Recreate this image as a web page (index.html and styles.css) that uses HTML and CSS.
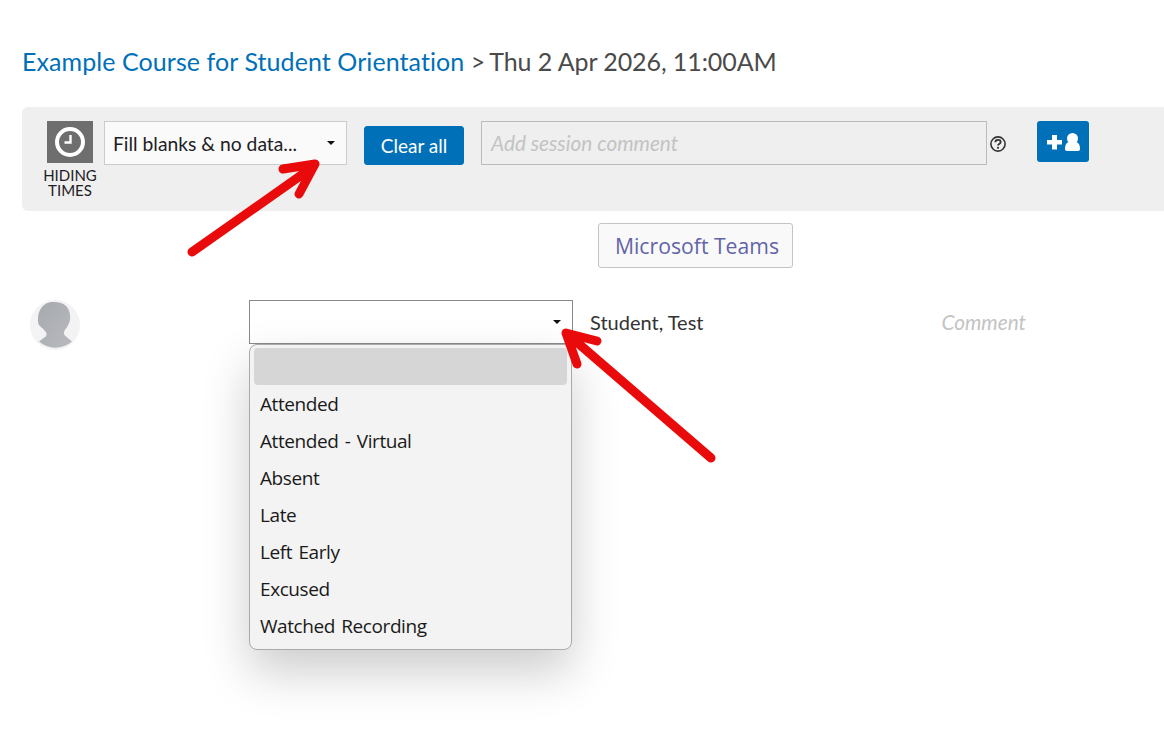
FILE: index.html
```html
<!DOCTYPE html>
<html lang="en">
<head>
<meta charset="utf-8">
<title>Attendance session</title>
<link rel="stylesheet" href="styles.css">
</head>
<body>
<main class="page">
  <h1 class="title"><a class="title-link">Example Course for Student Orientation</a> &gt;<span class="title-date">Thu 2 Apr 2026, 11:00AM</span></h1>
  <section class="toolbar">
    <div class="times">
      <div class="clock">
        <svg width="32" height="32" viewBox="0 0 32 32"><circle cx="16" cy="16" r="13" fill="#6e6e6e" stroke="#fff" stroke-width="4"/><path d="M16.500 9v7.500H10.500" fill="none" stroke="#fff" stroke-width="2.400"/></svg>
      </div>
      <div class="times-label">HIDING TIMES</div>
    </div>
    <div class="select select-fill"><span>Fill blanks &amp; no data...</span><i class="caret"></i></div>
    <button class="btn-clear">Clear all</button>
    <div class="comment-input">Add session comment</div>
    <svg class="help" width="16" height="16" viewBox="0 0 16 16"><circle cx="8" cy="8" r="7.100" fill="none" stroke="#333" stroke-width="1.600"/><path d="M5.300 6.300c0-1.600 1.200-2.500 2.700-2.500s2.700.9 2.700 2.300c0 2-2.700 1.900-2.700 3.500" fill="none" stroke="#333" stroke-width="1.800"/><circle cx="8" cy="11.800" r="1.100" fill="#333"/></svg>
    <button class="btn-add" aria-label="Add user">
      <svg width="33" height="18" viewBox="0 0 33 18"><path d="M5 2h5v5h5v4.500h-5v5H5v-5H0V7h5z" fill="#fff"/><circle cx="25.500" cy="5.500" r="5.500" fill="#fff"/><path d="M18 16c0-4 1.500-7 4.500-7h6c3 0 4.500 3 4.500 7 0 1.300-.8 2-2 2H20c-1.200 0-2-.7-2-2z" fill="#fff"/></svg>
    </button>
  </section>
  <div class="teams-row"><button class="btn-teams">Microsoft Teams</button></div>
  <section class="student-row">
    <div class="avatar">
      <svg width="50" height="50" viewBox="0 0 50 50"><defs><linearGradient id="avatar-fill" x1="0" y1="0" x2="1" y2="1"><stop offset="0" stop-color="#a6a9ae"/><stop offset="1" stop-color="#b8babe"/></linearGradient></defs><circle cx="25" cy="25" r="25" fill="#f3f3f4"/><path d="M23 2c5 0 11 1 14 5 3 4 3.500 9 3 13-.5 3-2 5-3 7-1 2-2.500 3-3 5-.5 2 .5 3.500 2 4.500l6 5A25 25 0 0 1 9 41.500l6-4.500c2-1.500 2-3.500.5-5.500-1.500-1.500-2.500-3-4-4-2-1.500-3.500-3-3.500-6 0-4 0-9 3-13 2.500-4 6.500-6.500 12-6.500z" fill="url(#avatar-fill)"/></svg>
    </div>
    <div class="select select-status"><i class="caret"></i></div>
    <div class="student-name">Student, Test</div>
    <div class="student-comment">Comment</div>
  </section>
</main>
<ul class="menu">
  <li class="menu-item menu-selected"></li>
  <li class="menu-item">Attended</li>
  <li class="menu-item">Attended - Virtual</li>
  <li class="menu-item">Absent</li>
  <li class="menu-item">Late</li>
  <li class="menu-item">Left Early</li>
  <li class="menu-item">Excused</li>
  <li class="menu-item">Watched Recording</li>
</ul>
<svg class="arrows" width="1164" height="738" viewBox="0 0 1164 738">
  <g fill="none" stroke="#e90b0b" stroke-width="9" stroke-linecap="round" stroke-linejoin="round">
    <path d="M192 252L310 169M283 169L315 164L299 194"/>
    <path d="M711 458L572 338M597 341L566 333L577 364"/>
  </g>
</svg>
</body>
</html>
```
FILE: styles.css
```css
* { box-sizing: border-box; }
html, body { margin: 0; padding: 0; background: #fff; overflow: hidden; height: 100%; }
body { font-family: Lato, "Liberation Sans", sans-serif; color: #1d2125; font-variant-ligatures: none; }
.page { padding: 43px 0 0 22px; }
.title { margin: 0 0 28px; font-size: 25px; line-height: 36px; font-weight: 400; color: #4a4a4a; white-space: nowrap; }
.title-link { color: #0070b8; letter-spacing: .08px; }
.title-date { margin-left: 4px; letter-spacing: -.08px; }
.toolbar { display: flex; align-items: flex-start; height: 104px; width: 1160px; padding: 14px 0 0 25px; background: #efefef; border-radius: 6px 0 0 6px; }
.times { width: 46px; display: flex; flex-direction: column; align-items: center; }
.clock { width: 46px; height: 42px; background: #6e6e6e; display: flex; align-items: center; justify-content: center; }
.times-label { width: 60px; flex: none; margin-top: 5px; font-size: 15px; line-height: 15px; text-align: center; color: #1d2125; }
.select { position: relative; display: flex; align-items: center; background: #fafafa; border: 1px solid #ccc; height: 44px; font-size: 19.300px; }
.select-fill { width: 243px; margin-left: 11px; padding-left: 8px; color: #1d2125; }
.caret { position: absolute; right: 11px; top: 19px; width: 0; height: 0; border-left: 4px solid transparent; border-right: 4px solid transparent; border-top: 4px solid #111; }
.btn-clear { width: 100px; height: 39px; margin: 5px 0 0 17px; padding: 0; background: #0070b8; color: #fff; border: 1px solid #0070b8; border-radius: 3px; font: 400 19px Lato, sans-serif; }
.comment-input { width: 506px; height: 44px; margin-left: 17px; padding: 0 0 2px 9px; display: flex; align-items: center; background: #efefef; border: 1px solid #bbb; font-size: 20.800px; font-style: italic; color: #c3c3c3; }
.help { margin: 15px 0 0 3px; flex: none; }
.btn-add { width: 52px; height: 41px; margin-left: 31px; padding: 0; display: flex; align-items: center; justify-content: center; background: #0070b8; border: 0; border-radius: 3px; }
.teams-row { margin: 12px 0 0 576px; }
.btn-teams { display: block; width: 195px; height: 45px; padding: 0 0 0 3px; background: #f9f9f9; border: 1px solid #c4c4c4; border-radius: 3px; font: 400 21.200px "Open Sans", sans-serif; color: #6264a7; }
.student-row { position: relative; display: flex; align-items: flex-start; margin-top: 32px; padding-left: 8px; }
.avatar { width: 50px; height: 50px; flex: none; }
.avatar svg { display: block; }
.select-status { width: 324px; margin-left: 169px; background: #fff; border-color: #8a8a8a; }
.student-name { margin-left: 17px; font-size: 20px; line-height: 44px; color: #333; }
.student-comment { margin-left: 238px; font-size: 20.800px; line-height: 44px; font-style: italic; color: #c3c3c3; }
.menu { position: absolute; left: 249px; top: 344px; width: 323px; height: 306px; margin: 0; padding: 3px 4px 4px; list-style: none; background: #f3f3f3; border: 1px solid #aaa; border-radius: 8px; box-shadow: 0 22px 48px rgba(0,0,0,.2); font-family: "Open Sans", "Noto Sans", sans-serif; font-size: 19px; color: #1a1a1a; }
.menu-item { height: 37px; padding-left: 6px; line-height: 39px; white-space: nowrap; letter-spacing: -.42px; word-spacing: 1.800px; }
.menu-selected { background: #d6d6d6; border-radius: 4px; }
.arrows { position: absolute; left: 0; top: 0; pointer-events: none; }
```
